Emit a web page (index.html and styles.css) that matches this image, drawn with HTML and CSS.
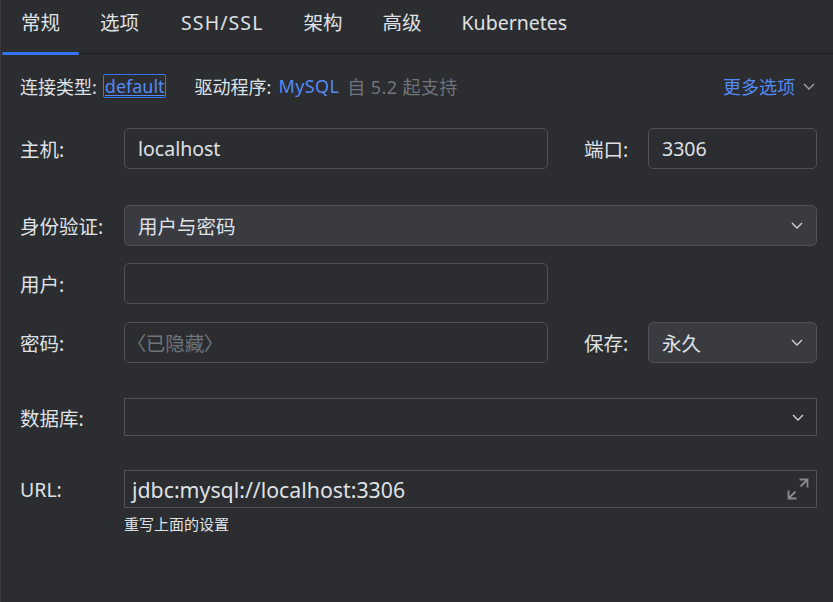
FILE: index.html
```html
<!DOCTYPE html>
<html lang="zh-CN">
<head>
<meta charset="utf-8">
<title>连接</title>
<link rel="stylesheet" href="styles.css">
</head>
<body>
<div class="window">
  <nav class="tabs">
    <div class="tab active">常规</div>
    <div class="tab">选项</div>
    <div class="tab latin-caps">SSH/SSL</div>
    <div class="tab">架构</div>
    <div class="tab">高级</div>
    <div class="tab">Kubernetes</div>
  </nav>
  <main class="content">
    <div class="info-row">
      <span class="info-label">连接类型:</span>
      <a class="link">default</a>
      <span class="info-label driver">驱动程序:</span>
      <span class="blue">MySQL</span>
      <span class="muted">自 5.2 起支持</span>
      <span class="more">更多选项<svg class="chev-more" width="12" height="7" viewBox="0 0 12 7"><polyline points="1,1 6,6 11,1"/></svg></span>
    </div>

    <div class="row row-host">
      <span class="label">主机:</span>
      <div class="field input host">localhost</div>
      <span class="label side">端口:</span>
      <div class="field input port">3306</div>
    </div>

    <div class="row row-auth">
      <span class="label">身份验证:</span>
      <div class="field select wide">
        <span>用户与密码</span>
        <svg class="chev" width="12" height="7" viewBox="0 0 12 7"><polyline points="1,1 6,6 11,1"/></svg>
      </div>
    </div>

    <div class="row row-user">
      <span class="label">用户:</span>
      <div class="field input host"></div>
    </div>

    <div class="row row-pass">
      <span class="label">密码:</span>
      <div class="field input host"><span class="placeholder">〈已隐藏〉</span></div>
      <span class="label side">保存:</span>
      <div class="field select port">
        <span>永久</span>
        <svg class="chev" width="12" height="7" viewBox="0 0 12 7"><polyline points="1,1 6,6 11,1"/></svg>
      </div>
    </div>

    <div class="row row-db">
      <span class="label">数据库:</span>
      <div class="field square db">
        <span></span>
        <svg class="chev" width="12" height="7" viewBox="0 0 12 7"><polyline points="1,1 6,6 11,1"/></svg>
      </div>
    </div>

    <div class="row row-url">
      <span class="label">URL:</span>
      <div class="field square url">
        <span class="url-text">jdbc:mysql://localhost:3306</span>
        <svg class="expand" width="22" height="22" viewBox="0 0 22 22">
          <path d="M12.5 1.5H20.5V9.5M20.5 1.5L13.5 8.5"/>
          <path d="M1.5 12.5V20.5H9.5M1.5 20.5L8.5 13.5"/>
        </svg>
      </div>
    </div>
    <div class="hint">重写上面的设置</div>
  </main>
</div>
</body>
</html>
```

FILE: styles.css
```css
html, body {
  margin: 0;
  padding: 0;
}

body {
  width: 833px;
  height: 602px;
  overflow: hidden;
  background: #2b2d30;
  color: #dfe1e5;
  font-family: "Noto Sans", "Noto Sans CJK SC", sans-serif;
}

.window {
  box-sizing: border-box;
  height: 602px;
  border-left: 1px solid #393b40;
}

/* Tabs */
.tabs {
  display: flex;
  height: 53px;
  border-bottom: 1px solid #1e1f22;
}

.tab {
  position: relative;
  padding: 0 20px;
  line-height: 46px;
  font-size: 19.5px;
  color: #dfe1e5;
  white-space: nowrap;
}

.tab.latin-caps {
  letter-spacing: 1.1px;
  padding: 0 20px 0 22px;
}

.tab.active::after {
  content: "";
  position: absolute;
  left: 1px;
  right: 1px;
  top: 52px;
  height: 3px;
  border-radius: 2px;
  background: #3574f0;
}

/* Content */
.content {
  padding: 0 16px 0 19px;
}

.info-row {
  display: flex;
  align-items: center;
  height: 24px;
  margin-top: 20px;
  font-size: 18px;
  white-space: nowrap;
}

.link {
  box-sizing: border-box;
  height: 24px;
  line-height: 22px;
  margin-left: 6px;
  padding: 0 0 0 1px;
  border: 1px solid #3574f0;
  border-radius: 2px;
  color: #548af7;
  text-decoration: underline;
  text-underline-offset: 2px;
}

.driver {
  margin-left: 29px;
}

.blue {
  color: #548af7;
  margin-left: 7px;
  letter-spacing: 0.4px;
}

.muted {
  color: #6f737a;
  margin-left: 8px;
  letter-spacing: 0.4px;
}

.more {
  margin-left: auto;
  margin-right: 2px;
  color: #548af7;
  display: flex;
  align-items: center;
}

.chev-more {
  margin-left: 8px;
  fill: none;
  stroke: #9da0a8;
  stroke-width: 1.4;
}

/* Form rows */
.row {
  display: flex;
  align-items: center;
}

.row-host { margin-top: 30px; }
.row-auth { margin-top: 36px; }
.row-user { margin-top: 17px; }
.row-pass { margin-top: 18px; }
.row-db   { margin-top: 35px; }
.row-url  { margin-top: 34px; }

.label {
  width: 104px;
  flex: none;
  font-size: 19.5px;
  white-space: nowrap;
}

.label.side {
  width: 64px;
  margin-left: 36px;
}

.field {
  box-sizing: border-box;
  display: flex;
  align-items: center;
  height: 41px;
  border: 1px solid #4e5157;
  font-size: 19.5px;
  white-space: nowrap;
}

.input {
  border-radius: 5px;
  padding: 0 13px;
  background: #2b2d30;
}

.select {
  border-radius: 5px;
  padding: 0 13px 0 13px;
  background: #393b40;
  justify-content: space-between;
}

.host { width: 424px; }
.port { flex: 1; }
.wide { flex: 1; }

.square {
  height: 38px;
  flex: 1;
  border-radius: 0;
  justify-content: space-between;
}

.db {
  padding: 0 12px 0 8px;
}

.url {
  padding: 0 7px 0 7px;
}

.url-text {
  font-size: 21.3px;
}

.chev {
  fill: none;
  stroke: #ced0d6;
  stroke-width: 1.4;
}

.expand {
  fill: none;
  stroke: #868a91;
  stroke-width: 1.8;
}

.placeholder {
  color: #6f737a;
  font-feature-settings: "palt";
  margin-left: -2px;
}

.hint {
  margin: 6px 0 0 104px;
  font-size: 15px;
  line-height: 20px;
}
```
